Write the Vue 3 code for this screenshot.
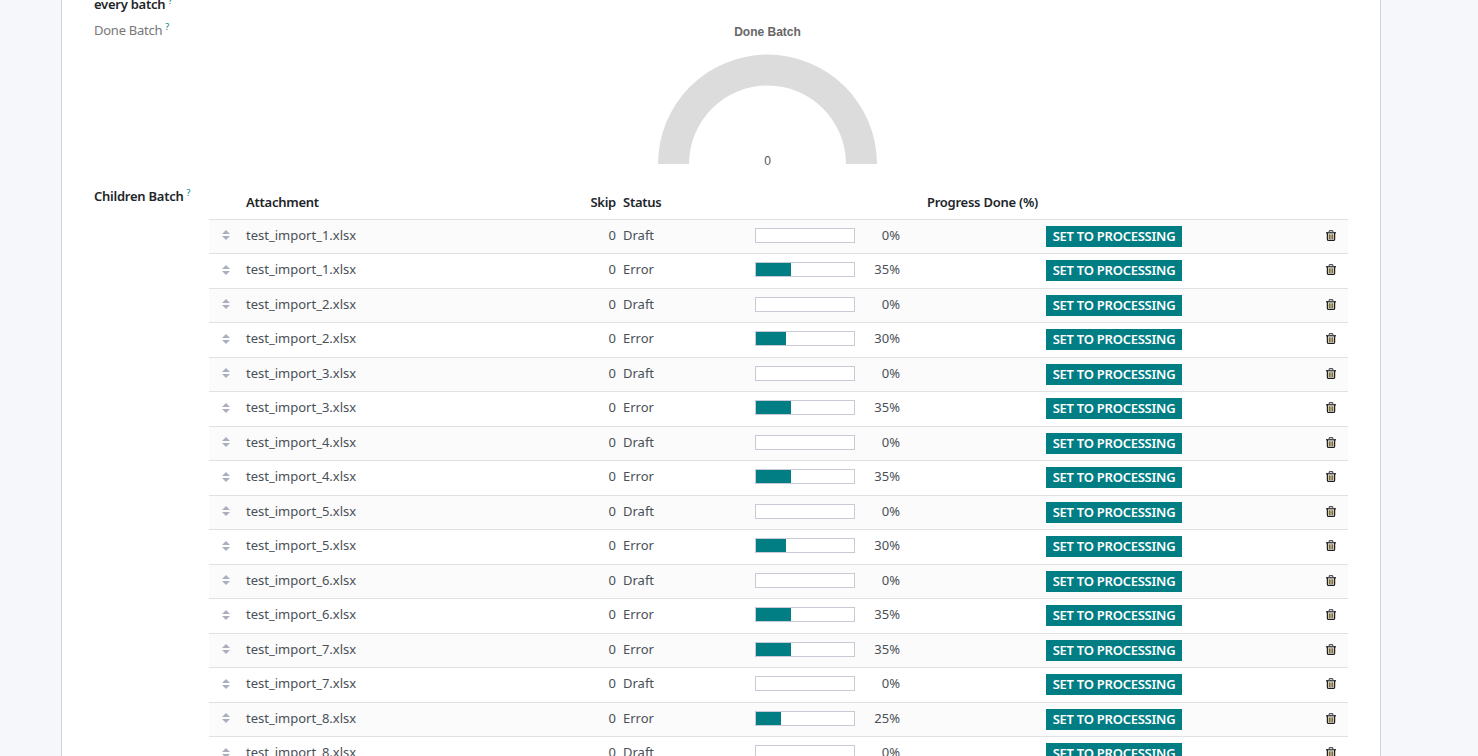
<script setup>
const rows = [
  ['test_import_1.xlsx', 'Draft', 0], ['test_import_1.xlsx', 'Error', 35],
  ['test_import_2.xlsx', 'Draft', 0], ['test_import_2.xlsx', 'Error', 30],
  ['test_import_3.xlsx', 'Draft', 0], ['test_import_3.xlsx', 'Error', 35],
  ['test_import_4.xlsx', 'Draft', 0], ['test_import_4.xlsx', 'Error', 35],
  ['test_import_5.xlsx', 'Draft', 0], ['test_import_5.xlsx', 'Error', 30],
  ['test_import_6.xlsx', 'Draft', 0], ['test_import_6.xlsx', 'Error', 35],
  ['test_import_7.xlsx', 'Error', 35], ['test_import_7.xlsx', 'Draft', 0],
  ['test_import_8.xlsx', 'Error', 25], ['test_import_8.xlsx', 'Draft', 0],
]
</script>

<template>
  <div class="page">
    <div class="sheet">
      <div class="form-row first">
        <div class="label strong">every batch<sup>?</sup></div>
      </div>
      <div class="form-row chart-row">
        <div class="label muted">Done Batch<sup>?</sup></div>
        <div class="chart">
          <svg width="300" height="162" viewBox="0 0 300 162">
            <text x="149.5" y="16" class="chart-title" text-anchor="middle">Done Batch</text>
            <path d="M40 144 A109.5 109.5 0 0 1 259 144 L228 144 A78.5 78.5 0 0 0 71 144 Z" fill="#dcdcdc" />
            <text x="149.5" y="145" class="chart-value" text-anchor="middle">0</text>
          </svg>
        </div>
      </div>
      <div class="form-row">
        <div class="label strong children">Children Batch<sup>?</sup></div>
        <div class="table">
          <div class="line head">
            <span></span>
            <span>Attachment</span>
            <span class="right">Skip</span>
            <span>Status</span>
            <span class="right head-progress">Progress Done (%)</span>
            <span></span>
            <span></span>
          </div>
          <div v-for="(r, i) in rows" :key="i" class="line body" :class="{ odd: i % 2 === 0 }">
            <span class="handle">
              <svg width="8" height="10" viewBox="0 0 8 10"><path d="M4 0 L8 4 H0 Z M0 6 H8 L4 10 Z" fill="#a9afbc" /></svg>
            </span>
            <span class="txt">{{ r[0] }}</span>
            <span class="txt right">0</span>
            <span class="txt">{{ r[1] }}</span>
            <span class="progress">
              <span class="bar"><span class="fill" :style="{ width: r[2] + 'px' }"></span></span>
              <span class="pct">{{ r[2] }}%</span>
            </span>
            <span><span class="btn">SET TO PROCESSING</span></span>
            <span class="trash">
              <svg width="10" height="11" viewBox="0 0 11 12" fill="none" stroke="#1a1a1a" stroke-width="1.3">
                <path d="M0 3 H11" />
                <path d="M3.5 3 V1.5 Q3.5 .6 4.5 .6 H6.5 Q7.5 .6 7.5 1.5 V3" stroke="#555" />
                <path d="M1.5 3 V10 Q1.5 11.4 3 11.4 H8 Q9.5 11.4 9.5 10 V3" />
                <path d="M3.6 4.5 V10 M5.5 4.5 V10 M7.4 4.5 V10" stroke="#6a5a20" />
              </svg>
            </span>
          </div>
        </div>
      </div>
    </div>
  </div>
</template>

<style>
html, body { margin: 0; background: #f5f7fb; }
</style>

<style scoped>
.page {
  height: 756px;
  overflow: hidden;
  background: #f5f7fb;
  font-family: "Noto Sans", "Open Sans", sans-serif;
  font-size: 13px;
  color: #495057;
}
.sheet {
  box-sizing: border-box;
  width: 1320px;
  height: 900px;
  margin: -10px 0 0 61px;
  padding: 0 32px;
  background: #fff;
  border: 1px solid #ced4da;
  border-width: 0 1px;
}
.form-row { display: flex; }
.first { height: 30px; align-items: flex-start; }
.first .label { line-height: 28px; }
.label { width: 115px; flex: none; line-height: 20px; letter-spacing: -.25px; }
.strong { font-weight: 600; color: #212529; }
.muted { color: #777; }
sup { font-size: 9px; font-weight: 400; color: #017e84; margin-left: 3px; line-height: 0; vertical-align: 5px; }
.chart-row { height: 162px; }
.chart { flex: 1; display: flex; justify-content: center; padding-right: 22px; }
.chart svg { display: block; }
.chart-title { font: 700 12px "Liberation Sans", sans-serif; fill: #666; }
.chart-value { font: 12px "Liberation Sans", sans-serif; fill: #555; }
.children { padding-top: 4px; }
.table { width: 1139px; }
.line {
  display: grid;
  grid-template-columns: 37px 326px 44px 130px 300px 272px 30px;
  align-items: center;
}
.line > span { white-space: nowrap; }
.right { text-align: right; }
.head { height: 36.6px; font-weight: 600; color: #212529; padding-top: 3px; box-sizing: border-box; letter-spacing: -.25px; }
.head-progress { padding-right: 8px; }
.head span:nth-child(4), .body span:nth-child(4) { padding-left: 7px; }
.body { height: 34.5px; box-sizing: border-box; border-top: 1px solid #dee2e6; }
.odd { background: #fbfbfb; }
.txt { padding-bottom: 3.4px; }
.handle { display: flex; padding-left: 13px; padding-bottom: 2px; }
.progress { display: flex; align-items: center; padding-left: 9px; padding-bottom: 2px; }
.bar { display: block; box-sizing: border-box; width: 100px; height: 15px; border: 1px solid #c8cad6; background: #fff; }
.fill { display: block; height: 100%; background: #017e84; }
.pct { width: 45px; text-align: right; padding-bottom: 1.4px; }
.btn {
  display: inline-block;
  box-sizing: border-box;
  width: 136px;
  height: 21px;
  line-height: 21px;
  text-align: center;
  background: #017e84;
  color: #fff;
  font-weight: 600;
  font-size: 13px;
  letter-spacing: -.25px;
}
.trash { display: flex; justify-content: center; padding-right: 4px; padding-bottom: 2px; }
</style>
